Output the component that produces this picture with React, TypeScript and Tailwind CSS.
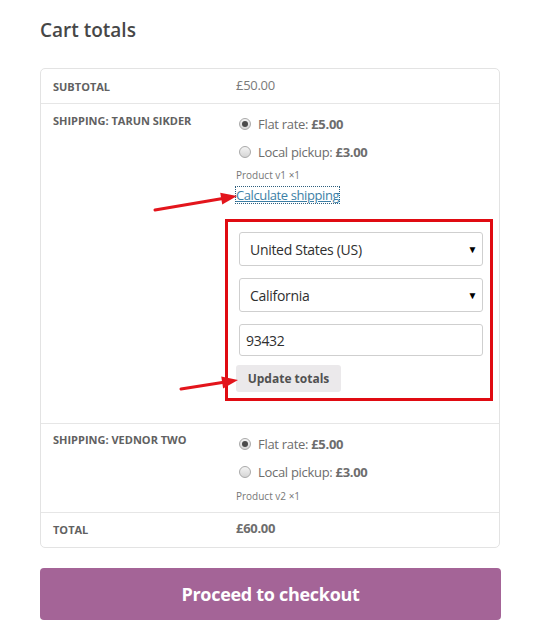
import React from "react";

function Radio({ checked }: { checked?: boolean }) {
  return (
    <span className="relative flex h-[12px] w-[12px] shrink-0 items-center justify-center rounded-full border border-[#a9a9a9] bg-gradient-to-b from-[#f4f4f4] to-[#d6d6d6]">
      {checked && <span className="h-[6px] w-[6px] rounded-full bg-[#4a4a4a]" />}
    </span>
  );
}

function Option({ label, price, checked }: { label: string; price: string; checked?: boolean }) {
  return (
    <div className="flex h-[18px] items-center">
      <span className="ml-[3px]">
        <Radio checked={checked} />
      </span>
      <span className="ml-[7px] text-[13px] leading-[18px] tracking-[-0.3px] text-[#6d6d6d]">
        {label} <span className="font-bold">{price}</span>
      </span>
    </div>
  );
}

function Arrow({ x1, y1, x2, y2 }: { x1: number; y1: number; x2: number; y2: number }) {
  const ang = Math.atan2(y2 - y1, x2 - x1);
  const len = 16;
  const w = 6;
  const bx = x2 - len * Math.cos(ang);
  const by = y2 - len * Math.sin(ang);
  const px = -Math.sin(ang) * w;
  const py = Math.cos(ang) * w;
  return (
    <>
      <line x1={x1} y1={y1} x2={bx} y2={by} stroke="#e3151c" strokeWidth={3} strokeLinecap="round" />
      <polygon points={`${x2},${y2} ${bx + px},${by + py} ${bx - px},${by - py}`} fill="#e3151c" />
    </>
  );
}

export default function App() {
  return (
    <div className="relative h-[632px] w-[536px] bg-white px-[40px] pt-[17px] font-['Open_Sans',sans-serif]">
      <h2 className="text-[19px] font-semibold leading-[26px] text-[#474747]">Cart totals</h2>

      <div className="mt-[25px] w-[460px] rounded-[5px] border border-[#e3e3e3]">
        {/* Subtotal */}
        <div className="flex h-[35px] border-b border-[#e6e6e6]">
          <div className="w-[195px] pl-[12px] pt-[10px] text-[11px] font-bold uppercase leading-[15px] text-[#616161]">
            Subtotal
          </div>
          <div className="pt-[7px] text-[13px] leading-[18px] tracking-[-0.3px] text-[#7a7a7a]">£50.00</div>
        </div>

        {/* Shipping: Tarun Sikder */}
        <div className="flex border-b border-[#e6e6e6] pb-[22px]">
          <div className="w-[195px] pl-[12px] pt-[9px] text-[11px] font-bold uppercase leading-[15px] text-[#616161]">
            Shipping: Tarun Sikder
          </div>
          <div className="flex flex-col pt-[11px]">
            <Option label="Flat rate:" price="£5.00" checked />
            <div className="mt-[10px]">
              <Option label="Local pickup:" price="£3.00" />
            </div>
            <div className="mt-[7px] text-[10px] leading-[14px] text-[#777777]">Product v1 ×1</div>
            <div className="mt-[5px] flex">
              <a
                href="#"
                className="text-[13px] leading-[16px] tracking-[-0.4px] text-[#3d7fa6] underline outline outline-1 outline-dotted outline-[#2d5f7e]"
              >
                Calculate shipping
              </a>
            </div>
            <div className="-ml-[11px] mt-[16px] flex w-[268px] flex-col border-[3px] border-[#e00b12] pb-[6px] pl-[11px] pr-[7px] pt-[10px]">
              <div className="flex h-[34px] items-center justify-between rounded-[3px] border border-[#cfcfcf] pl-[10px] pr-[5px] text-[14px] tracking-[-0.3px] text-[#2f2f2f]">
                <span>United States (US)</span>
                <span className="text-[10px] text-black">▼</span>
              </div>
              <div className="mt-[12px] flex h-[34px] items-center justify-between rounded-[3px] border border-[#cfcfcf] pl-[10px] pr-[5px] text-[14px] tracking-[-0.3px] text-[#2f2f2f]">
                <span>California</span>
                <span className="text-[10px] text-black">▼</span>
              </div>
              <div className="mt-[12px] flex h-[32px] items-center rounded-[3px] border border-[#cfcfcf] pl-[6px] text-[14px] tracking-[-0.3px] text-[#2f2f2f]">
                93432
              </div>
              <div className="-ml-[3px] mt-[9px] flex">
                <div className="flex h-[27px] w-[105px] items-center justify-center rounded-[3px] bg-[#ebe9eb] text-[12px] font-bold text-[#515151]">
                  Update totals
                </div>
              </div>
            </div>
          </div>
        </div>

        {/* Shipping: Vednor Two */}
        <div className="flex border-b border-[#e6e6e6] pb-[9px]">
          <div className="w-[195px] pl-[12px] pt-[8px] text-[11px] font-bold uppercase leading-[15px] text-[#616161]">
            Shipping: Vednor Two
          </div>
          <div className="flex flex-col pt-[11px]">
            <Option label="Flat rate:" price="£5.00" checked />
            <div className="mt-[10px]">
              <Option label="Local pickup:" price="£3.00" />
            </div>
            <div className="mt-[8px] text-[10px] leading-[14px] text-[#777777]">Product v2 ×1</div>
          </div>
        </div>

        {/* Total */}
        <div className="flex h-[34px]">
          <div className="w-[195px] pl-[12px] pt-[9px] text-[11px] font-bold uppercase leading-[15px] text-[#616161]">
            Total
          </div>
          <div className="pt-[6px] text-[13px] font-bold leading-[18px] tracking-[-0.3px] text-[#6d6d6d]">£60.00</div>
        </div>
      </div>

      <button className="mt-[20px] flex h-[52px] w-[461px] items-center justify-center rounded-[4px] bg-[#a46497] text-[18px] font-bold tracking-[-0.3px] text-white">
        Proceed to checkout
      </button>

      <svg className="pointer-events-none absolute left-0 top-0" width="536" height="632">
        <Arrow x1={155} y1={210} x2={237} y2={196} />
        <Arrow x1={181} y1={389} x2={238} y2={380} />
      </svg>
    </div>
  );
}
